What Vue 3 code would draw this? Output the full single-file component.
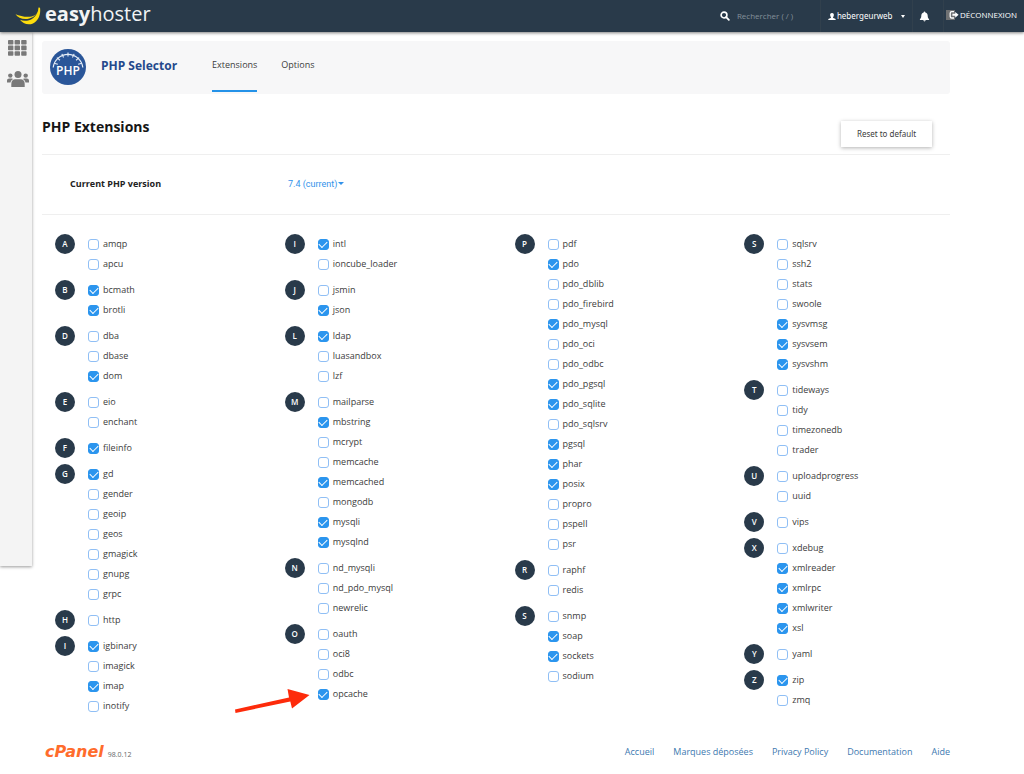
<script setup>
import { ref, reactive } from 'vue'

const parse = (spec) =>
  spec.split('|').map((part) => {
    const [letter, names] = part.split(':')
    return {
      letter,
      items: names.split(' ').map((n) => ({ name: n.replace('*', ''), on: n.endsWith('*') })),
    }
  })

const columns = reactive([
  parse('A:amqp apcu|B:bcmath* brotli*|D:dba dbase dom*|E:eio enchant|F:fileinfo*|G:gd* gender geoip geos gmagick gnupg grpc|H:http|I:igbinary* imagick imap* inotify'),
  parse('I:intl* ioncube_loader|J:jsmin json*|L:ldap* luasandbox lzf|M:mailparse mbstring* mcrypt memcache memcached* mongodb mysqli* mysqlnd*|N:nd_mysqli nd_pdo_mysql newrelic|O:oauth oci8 odbc opcache*'),
  parse('P:pdf pdo* pdo_dblib pdo_firebird pdo_mysql* pdo_oci pdo_odbc pdo_pgsql* pdo_sqlite* pdo_sqlsrv pgsql* phar* posix* propro pspell psr|R:raphf redis|S:snmp soap* sockets* sodium'),
  parse('S:sqlsrv ssh2 stats swoole sysvmsg* sysvsem* sysvshm*|T:tideways tidy timezonedb trader|U:uploadprogress uuid|V:vips|X:xdebug xmlreader* xmlrpc* xmlwriter* xsl*|Y:yaml|Z:zip* zmq'),
])

const search = ref('')
const links = ['Accueil', 'Marques déposées', 'Privacy Policy', 'Documentation', 'Aide']
const dialTicks = [-75, -50, -25, 0, 25, 50, 75]
</script>

<template>
  <div class="page">
    <header class="topbar">
      <a class="brand" href="#">
        <svg class="banana" viewBox="0 0 26 18" aria-hidden="true">
          <path d="M24 0.5 C24 5 21 8.500 16.500 9.500 C11 10.600 5 8.800 0.500 7.200 C2.500 10 6 12 10.500 12 C15.500 12 21 9.500 24.500 2.500 Z" fill="#f8d90f" />
          <path d="M23.500 0.500 L25 0.800 C26 7 23.500 14 18 16.500 C13 18.600 7.500 16.500 5 12.800 C9 14.500 14 14 18 11.200 C21.500 8.700 23.400 5 23.500 0.500 Z" fill="#fddc0c" />
        </svg>
        <span class="brand-name"><b>easy</b>hoster</span>
      </a>
      <div class="tools">
        <label class="search">
          <svg viewBox="0 0 12 12" aria-hidden="true">
            <circle cx="4.800" cy="4.800" r="3.500" fill="none" stroke="#fff" stroke-width="1.900" />
            <path d="M7.400 7.400 L10.600 10.600" stroke="#fff" stroke-width="2.200" stroke-linecap="round" />
          </svg>
          <input v-model="search" type="text" placeholder="Rechercher ( / )" aria-label="Rechercher" />
        </label>
        <button class="user" type="button">
          <svg viewBox="0 0 10 10" aria-hidden="true">
            <path d="M5 0.500 C7 0.500 7.500 2 7.300 3.500 C7.200 4.600 6.700 5.400 6.200 5.900 C6.200 7 7 7.100 8.200 7.600 C9.400 8.100 9.700 8.500 9.700 9.300 H0.300 C0.300 8.500 0.600 8.100 1.800 7.600 C3 7.100 3.800 7 3.800 5.900 C3.300 5.400 2.800 4.600 2.700 3.500 C2.500 2 3 0.500 5 0.500 Z" fill="#fff" />
          </svg>
          <span>hebergeurweb</span>
          <i class="caret"></i>
        </button>
        <button class="bell" type="button" aria-label="Notifications">
          <svg viewBox="0 0 12 12" aria-hidden="true">
            <path d="M6 0.500 C6.600 0.500 6.900 0.900 6.900 1.500 C8.800 2 9.500 3.500 9.500 5.200 C9.500 7.300 10 8 11 9 V9.700 H1 V9 C2 8 2.500 7.300 2.500 5.200 C2.500 3.500 3.200 2 5.100 1.500 C5.100 0.900 5.400 0.500 6 0.500 Z M4.700 10.200 H7.300 C7.300 11.800 4.700 11.800 4.700 10.200 Z" fill="#fff" />
          </svg>
        </button>
        <a class="logout" href="#">
          <svg viewBox="0 0 13 12" aria-hidden="true">
            <rect x="0" y="1" width="9" height="10" fill="#6f7173" />
            <path d="M8 2.600 H5.800 C4.700 2.600 4.200 3.200 4.200 4.200 V7.400 C4.200 8.400 4.700 9 5.800 9 H8" fill="none" stroke="#fff" stroke-width="1.300" />
            <path d="M6.400 4.800 H9.200 V2.900 L12.600 5.800 L9.200 8.700 V6.800 H6.400 Z" fill="#fff" />
          </svg>
          <span>DÉCONNEXION</span>
        </a>
      </div>
    </header>

    <div class="body">
      <nav class="rail" aria-label="Navigation">
        <a href="#" aria-label="Applications">
          <svg class="apps" viewBox="0 0 19 16" fill="#797979" aria-hidden="true">
            <template v-for="r in 3" :key="r">
              <rect v-for="c in 3" :key="c" :x="(c - 1) * 6.600" :y="(r - 1) * 5.600" width="5.400" height="4.600" rx="0.800" />
            </template>
          </svg>
        </a>
        <a href="#" aria-label="Utilisateurs">
          <svg class="people" viewBox="0 0 22 16" fill="#797979" aria-hidden="true">
            <circle cx="11" cy="3.600" r="3.500" />
            <circle cx="3.300" cy="4.600" r="2.200" />
            <circle cx="18.700" cy="4.600" r="2.200" />
            <path d="M4.300 16 V13 C4.300 9.800 6 8.300 8.200 8.300 H13.800 C16 8.300 17.700 9.800 17.700 13 V16 Z" />
            <path d="M0 11.500 V9.800 C0 8.300 1 7.500 2.200 7.500 H4.600 C5.200 7.500 5.700 7.700 6.100 8.100 C4.600 9 3.800 10.100 3.500 11.500 Z" />
            <path d="M22 11.500 V9.800 C22 8.300 21 7.500 19.800 7.500 H17.400 C16.800 7.500 16.300 7.700 15.900 8.100 C17.400 9 18.200 10.100 18.500 11.500 Z" />
          </svg>
        </a>
      </nav>

      <div class="content">
        <section class="appbar">
          <svg class="php" viewBox="0 0 36 36" role="img" aria-label="PHP">
            <circle cx="18" cy="18" r="18" fill="#2a5699" />
            <path d="M3.200 18.500 A14.900 14.900 0 0 1 32.800 18.500" fill="none" stroke="#e6eef8" stroke-width="1.200" />
            <path v-for="t in dialTicks" :key="t" d="M18 3.500 V7.500" :transform="`rotate(${t} 18 18)`" stroke="#e6eef8" stroke-width="1.100" />
            <text x="18" y="26" text-anchor="middle" fill="#fff" class="php-text">PHP</text>
          </svg>
          <h1>PHP Selector</h1>
          <nav class="tabs">
            <a class="active" href="#">Extensions</a>
            <a href="#">Options</a>
          </nav>
        </section>

        <div class="heading">
          <h2>PHP Extensions</h2>
          <button class="reset" type="button">Reset to default</button>
        </div>

        <div class="version">
          <strong id="version-label">Current PHP version</strong>
          <button type="button" aria-describedby="version-label">7.4 (current)<i class="caret"></i></button>
        </div>

        <main class="grid">
          <div v-for="(groups, ci) in columns" :key="ci" class="column">
            <section v-for="g in groups" :key="g.letter" class="group">
              <span class="letter">{{ g.letter }}</span>
              <div>
                <label v-for="item in g.items" :key="item.name" class="ext">
                  <input v-model="item.on" type="checkbox" />
                  <span>{{ item.name }}</span>
                  <svg v-if="item.name === 'opcache'" class="pointer" viewBox="0 0 76 26" aria-hidden="true">
                    <path d="M1 21.500 L55 9.500 L53.500 1 L75.500 7 L58 20.500 L56.300 13.500 L1.500 25 Z" fill="#fd2b0b" />
                  </svg>
                </label>
              </div>
            </section>
          </div>
        </main>

        <footer>
          <a class="cpanel" href="#">cPanel</a>
          <span class="release">98.0.12</span>
          <nav>
            <a v-for="l in links" :key="l" href="#">{{ l }}</a>
          </nav>
        </footer>
      </div>
    </div>
  </div>
</template>

<style>
body {
  background: #fff;
}
</style>

<style scoped>
.page {
  font-family: "Open Sans", "Noto Sans", sans-serif;
  font-size: 9px;
  line-height: 20px;
  color: #3c3c3c;
}
.page * {
  box-sizing: border-box;
}
a {
  color: inherit;
  text-decoration: none;
}
button,
input {
  font: inherit;
  color: inherit;
  border: 0;
  background: none;
  padding: 0;
  margin: 0;
}
svg {
  display: block;
  flex: none;
}
.topbar {
  position: relative;
  display: flex;
  justify-content: space-between;
  height: 32px;
  background: #293a4a;
  color: #fff;
  box-shadow: 0 1px 3px rgba(0, 0, 0, 0.5);
}
.brand {
  display: flex;
  align-items: center;
  gap: 4px;
  padding-left: 15px;
}
.banana {
  width: 26px;
  height: 18px;
}
.brand-name {
  font-size: 20px;
  line-height: 28px;
  padding-bottom: 4px;
  color: #f2f4f5;
}
.tools {
  display: flex;
  font-size: 8px;
}
.tools > * {
  display: flex;
  align-items: center;
}
.search {
  gap: 7px;
  width: 100px;
}
.search svg {
  width: 10px;
  height: 10px;
}
.search input {
  width: 70px;
}
.search input::placeholder {
  color: #84909a;
  opacity: 1;
}
.user,
.bell,
.logout {
  border-left: 1px solid #31404d;
}
.user {
  gap: 1px;
  width: 92px;
  padding-left: 7px;
}
.user svg {
  width: 8px;
  height: 9px;
}
.user span {
  font-family: "Noto Sans", sans-serif;
}
.user .caret {
  margin-left: 8px;
}
.caret {
  display: inline-block;
  border: 3px solid transparent;
  border-top-color: currentColor;
  border-bottom: 0;
}
.user .caret {
  border-width: 3px 2px 0;
}
.bell {
  justify-content: center;
  width: 31px;
  padding-right: 6px;
}
.bell svg {
  width: 11px;
  height: 11px;
}
.logout {
  gap: 1px;
  padding: 0 7px 2px 2px;
}
.logout svg {
  width: 13px;
  height: 12px;
}
.body {
  display: flex;
  align-items: flex-start;
}
.rail {
  display: flex;
  flex-direction: column;
  align-items: center;
  gap: 15px;
  flex: none;
  width: 32px;
  height: 534px;
  padding: 8px 0 0 3px;
  background: #f4f4f4;
  box-shadow: 0 1px 3px rgba(0, 0, 0, 0.4);
}
.apps {
  width: 19px;
  height: 16px;
}
.people {
  width: 22px;
  height: 16px;
}
.content {
  flex: 1;
  min-width: 0;
  padding: 9px 74px 0 10px;
}
.appbar {
  display: flex;
  align-items: center;
  height: 53px;
  padding: 0 8px 2px;
  border-radius: 3px;
  background: #f7f7f8;
}
.php {
  width: 36px;
  height: 36px;
}
.php-text {
  font-size: 12px;
  font-weight: 600;
}
h1 {
  margin: 0 35px 2px 15px;
  font-size: 12px;
  font-weight: 700;
  color: #24498c;
}
.tabs {
  display: flex;
  gap: 24px;
  align-self: stretch;
}
.tabs a {
  padding-top: 14px;
}
.tabs .active {
  border-bottom: 2px solid #2492e8;
}
.heading {
  display: flex;
  justify-content: space-between;
  height: 61px;
  padding-right: 18px;
  border-bottom: 1px solid #efefef;
}
h2 {
  margin: 23px 0 0;
  font-size: 14px;
  font-weight: 700;
  color: #161616;
}
.reset {
  width: 91px;
  height: 26px;
  margin-top: 27px;
  background: #fff;
  box-shadow: 0 1px 4px rgba(0, 0, 0, 0.3);
  font-family: "Noto Sans", sans-serif;
  font-size: 8px;
}
.version {
  display: flex;
  align-items: center;
  height: 60px;
  padding: 0 0 2px 28px;
  border-bottom: 1px solid #efefef;
}
.version strong {
  width: 218px;
  color: #222;
}
.version button {
  display: flex;
  align-items: center;
  gap: 1px;
  font-family: Roboto, sans-serif;
  color: #3292ea;
}
.grid {
  display: grid;
  grid-template-columns: repeat(4, minmax(0, 1fr));
  column-gap: 24px;
  padding: 19px 0 0 13px;
}
.column {
  display: flex;
  flex-direction: column;
  gap: 6px;
}
.group {
  display: flex;
  gap: 13px;
}
.letter {
  width: 20px;
  height: 20px;
  border-radius: 50%;
  background: #293a4a;
  color: #fff;
  font-size: 8px;
  font-weight: 600;
  text-align: center;
}
.ext {
  position: relative;
  display: flex;
  align-items: center;
  gap: 4px;
  height: 20px;
}
.ext input {
  appearance: none;
  display: grid;
  place-items: center;
  width: 11px;
  height: 11px;
  margin-top: 1px;
  border: 1px solid #90bff5;
  border-radius: 3px;
  background: #fff;
}
.ext input:checked {
  border-color: #2b95ee;
  background: #2b95ee;
}
.ext input:checked::before {
  content: "";
  width: 7px;
  height: 4px;
  margin-bottom: 2px;
  border: solid #fff;
  border-width: 0 0 1px 1px;
  transform: rotate(-45deg);
}
.pointer {
  position: absolute;
  right: calc(100% + 8px);
  top: 4px;
  width: 76px;
  height: 26px;
}
footer {
  display: flex;
  align-items: center;
  padding: 26px 0 0 3px;
}
.cpanel {
  font-family: "DejaVu Sans", sans-serif;
  font-size: 16px;
  font-weight: 700;
  font-style: italic;
  color: #ff6c2c;
}
.release {
  margin: 6px 0 0 4px;
  font-size: 7px;
  line-height: 14px;
  color: #666;
}
footer nav {
  display: flex;
  gap: 19px;
  margin-left: auto;
  color: #4079b0;
}
</style>
